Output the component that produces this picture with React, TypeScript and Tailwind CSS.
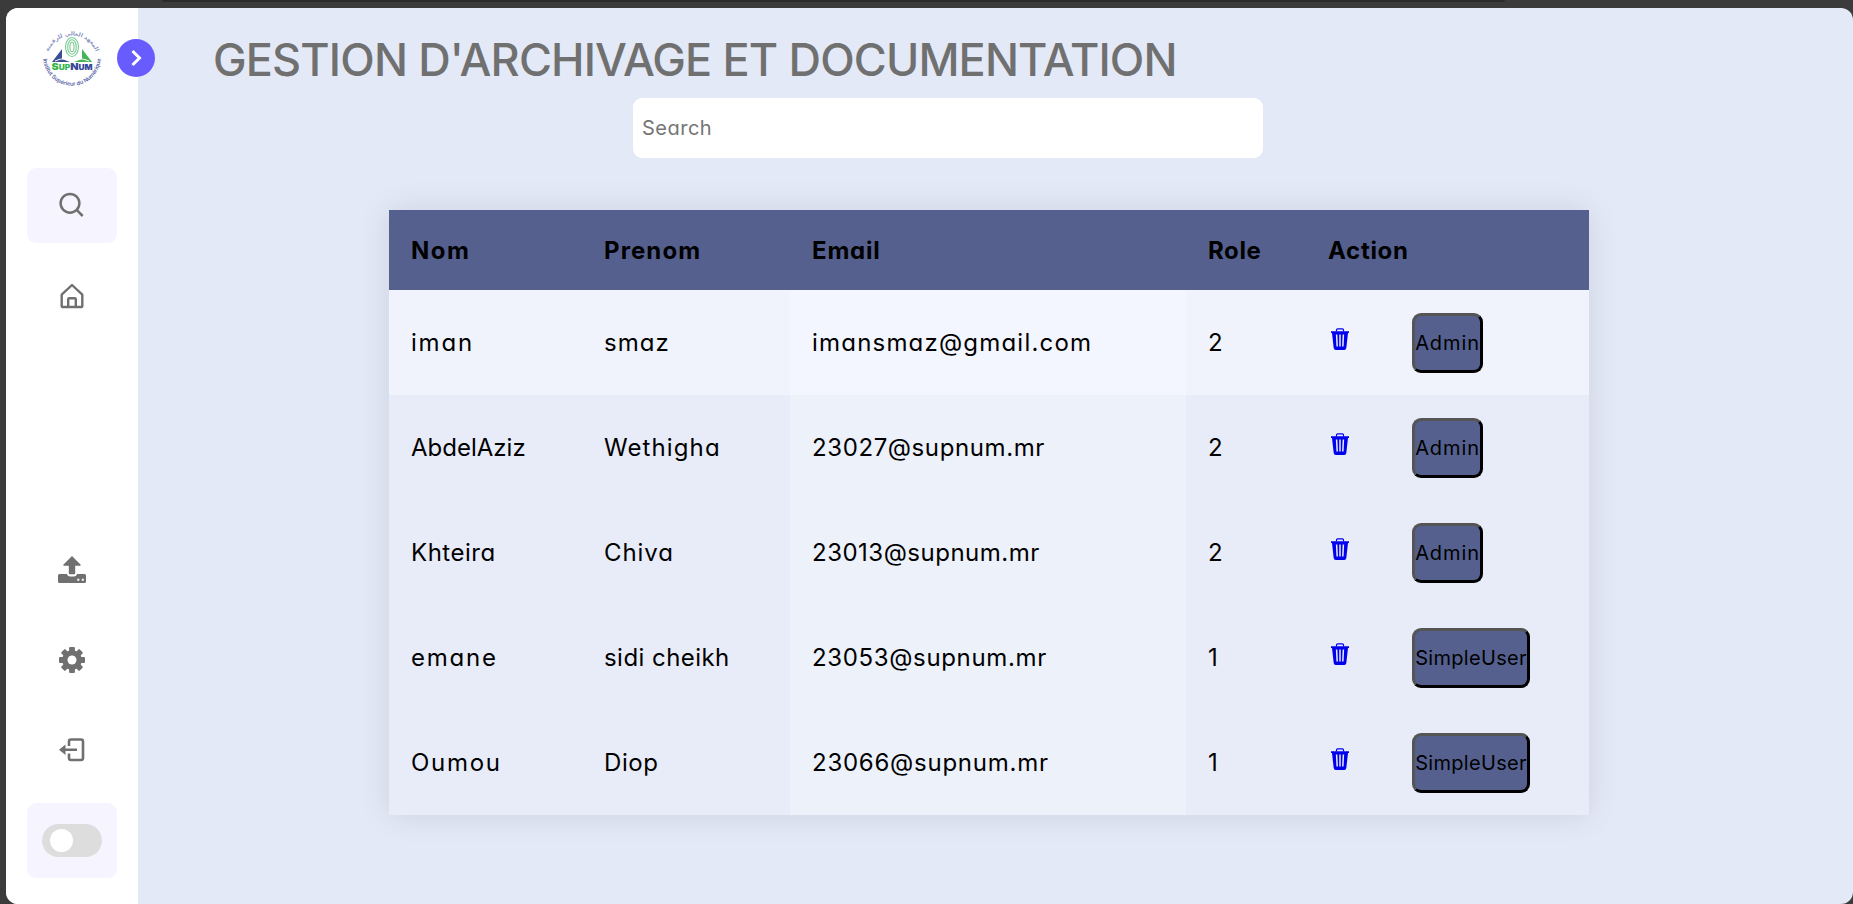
const headers = [
  { label: "Nom", tracking: "tracking-[1.5px]" },
  { label: "Prenom", tracking: "tracking-[1.1px]" },
  { label: "Email", tracking: "tracking-[0.8px]" },
  { label: "Role", tracking: "tracking-[0.6px]" },
  { label: "Action", tracking: "tracking-[0.7px]" },
];

type Cell = [text: string, tracking: string];

const users: { cells: Cell[]; role: string }[] = [
  { cells: [["iman", "tracking-[1.8px]"], ["smaz", "tracking-[1px]"], ["imansmaz@gmail.com", "tracking-[1.2px]"]], role: "2" },
  { cells: [["AbdelAziz", "tracking-[0px]"], ["Wethigha", "tracking-[1.1px]"], ["23027@supnum.mr", "tracking-[0.6px]"]], role: "2" },
  { cells: [["Khteira", "tracking-[0.5px]"], ["Chiva", "tracking-[0.9px]"], ["23013@supnum.mr", "tracking-[0.5px]"]], role: "2" },
  { cells: [["emane", "tracking-[1.8px]"], ["sidi cheikh", "tracking-[0.45px]"], ["23053@supnum.mr", "tracking-[0.65px]"]], role: "1" },
  { cells: [["Oumou", "tracking-[1.7px]"], ["Diop", "tracking-[0.6px]"], ["23066@supnum.mr", "tracking-[0.75px]"]], role: "1" },
];

function Logo() {
  return (
    <svg width="60" height="64" viewBox="0 0 60 64">
      <defs>
        <path id="top" d="M5 28 A25.500 25.500 0 0 1 55 28" />
        <path id="bottom" d="M1.200 29 A28.800 28.800 0 0 0 58.800 29" />
      </defs>
      <text fontSize="5.700" fill="#8b95c4" fontFamily="DejaVu Sans" fontWeight="bold" textAnchor="middle">
        <textPath href="#top" startOffset="50%">المعهد العالي للرقمنة</textPath>
      </text>
      <text fontSize="5.600" fill="#5966a8" fontFamily="Inter, sans-serif" fontWeight="600" textAnchor="middle">
        <textPath href="#bottom" startOffset="50%">Institut Supérieur du Numérique</textPath>
      </text>
      <path d="M10 34 L20 21 V31 L28 34Z" fill="#3b4f97" />
      <path d="M50 34 L40 21 V31 L32 34Z" fill="#45b457" />
      <path d="M13 33 Q24 28 29 34 Q35 28 47 33" fill="none" stroke="#fff" strokeWidth="1" />
      <g fill="none" stroke="#78cc91" strokeWidth="1.100">
        <ellipse cx="30" cy="19" rx="6.500" ry="9.500" />
        <ellipse cx="30" cy="19" rx="4.300" ry="7.200" />
        <ellipse cx="30" cy="19" rx="2.100" ry="4.800" />
      </g>
      <text x="9.500" y="41.500" fontFamily="Inter, sans-serif" fontSize="7" fontWeight="900" fill="#35b54a" textLength="41" lengthAdjust="spacingAndGlyphs">
        <tspan fontSize="9">S</tspan>UP<tspan fill="#35469a" fontSize="9">N</tspan><tspan fill="#35469a">UM</tspan>
      </text>
    </svg>
  );
}

function SearchIcon() {
  return (
    <svg width="26" height="26" viewBox="0 0 26 26" fill="none" stroke="#707070" strokeWidth="2.500">
      <circle cx="11" cy="11.300" r="9.400" />
      <path d="M17.600 17.900 23.700 24" />
    </svg>
  );
}

function HomeIcon() {
  return (
    <svg width="24" height="26" viewBox="0 0 24 26" fill="none" stroke="#707070" strokeWidth="2.400" strokeLinejoin="round">
      <path d="M1.700 11.700 12 2 22.300 11.700V23.200Q22.300 24 21.500 24H2.500Q1.700 24 1.700 23.200Z" />
      <path d="M8.200 24V16.200Q8.200 15.200 9.200 15.200H14.800Q15.800 15.200 15.800 16.200V24" />
    </svg>
  );
}

function UploadIcon() {
  return (
    <svg width="28" height="27" viewBox="0 0 28 27" fill="#707070">
      <path d="M14 0 22.700 8.800Q23 9.700 22 9.700H17.200V17.300Q17.200 18.300 16.200 18.300H11.800Q10.800 18.300 10.800 17.300V9.700H6Q5 9.700 5.300 8.800Z" />
      <path fillRule="evenodd" d="M1.500 18H8.800Q10 20.500 12 20.500H16Q18 20.500 19.200 18H26.500Q28 18 28 19.500V25.500Q28 27 26.500 27H1.500Q0 27 0 25.500V19.500Q0 18 1.500 18ZM19.300 22.800V24.800H21.300V22.800ZM23.800 22.800V24.800H25.800V22.800Z" />
    </svg>
  );
}

function GearIcon() {
  return (
    <svg width="26" height="26" viewBox="-13 -13 26 26">
      <g fill="#707070">
        <circle r="9.800" />
        {[0, 45, 90, 135].map((a) => (
          <rect key={a} x="-2.900" y="-13" width="5.800" height="26" rx="1" transform={`rotate(${a})`} />
        ))}
      </g>
      <circle r="4.500" fill="#fff" />
    </svg>
  );
}

function ExitIcon() {
  return (
    <svg width="26" height="24" viewBox="0 0 26 24">
      <path d="M10 8V3.500Q10 1.500 12 1.500H22Q24 1.500 24 3.500V20Q24 22 22 22H12Q10 22 10 20V15.500" fill="none" stroke="#707070" strokeWidth="2.600" />
      <path d="M0 11.700 6.500 6.500V10.400H18V13H6.500V17Z" fill="#707070" />
    </svg>
  );
}

function TrashIcon() {
  return (
    <svg width="18" height="22" viewBox="0 0 18 22">
      <path d="M5.500 3.500V2Q5.500.8 6.700.8H11.300Q12.500.8 12.500 2V3.500" fill="none" stroke="#0000ee" strokeWidth="1.200" />
      <path d="M0 3.300H18V5H0Z M1 5H17L15.300 20Q15 22 13.300 22H4.700Q3 22 2.700 20Z" fill="#0000ee" />
      <path d="M5.600 6.500 6.200 18.500M9 6.500V18.500M12.400 6.500 11.800 18.500" stroke="#e8edff" strokeWidth="1.500" />
    </svg>
  );
}

const cols = "grid grid-cols-[193px_208px_396px_120px_283px]";

export default function App() {
  return (
    <div className="flex h-[904px] w-[1853px] flex-col overflow-hidden bg-[#3b3b3b] font-[Inter,sans-serif] text-black [font-feature-settings:'cv11']">
      <div className="h-2 shrink-0">
        <div className="ml-[162px] h-0.5 w-[1343px] rounded-b bg-[#2b2b2b]" />
      </div>
      <div className="ml-1.5 flex h-[896px] overflow-hidden rounded-xl bg-[#e3e9f7]">
        <aside className="relative flex w-[132px] shrink-0 flex-col items-center bg-white">
          <div className="mt-5 h-[64px] w-[60px]"><Logo /></div>
          <button className="absolute top-[31px] left-[111px] flex size-[38px] items-center justify-center rounded-full bg-[#695cfe] pb-px">
            <svg width="12" height="18" viewBox="0 0 12 18" fill="none" stroke="#fff" strokeWidth="3">
              <path d="M2.500 2 9.500 9 2.500 16" />
            </svg>
          </button>
          <nav className="mt-[76px] flex flex-col items-center">
            <a className="flex h-[75px] w-[90px] items-center justify-center rounded-[9px] bg-[#f6f5ff] pb-px">
              <SearchIcon />
            </a>
            <a className="mt-[15px] flex h-[75px] w-[90px] items-center justify-center"><HomeIcon /></a>
          </nav>
          <div className="mt-[192px] flex flex-col items-center">
            <a className="flex h-[90px] items-center pb-[2px]"><UploadIcon /></a>
            <a className="flex h-[90px] items-center"><GearIcon /></a>
            <a className="flex h-[90px] items-center"><ExitIcon /></a>
            <div className="mt-2 flex h-[75px] w-[90px] items-center justify-center rounded-[9px] bg-[#f6f5ff]">
              <div className="flex h-[33px] w-[60px] items-center rounded-full bg-[#ddd] pl-2">
                <span className="size-[23px] rounded-full bg-white" />
              </div>
            </div>
          </div>
        </aside>
        <main className="flex flex-1 flex-col">
          <h1 className="mt-[18px] ml-[75px] h-[67px] text-[45px] leading-[67px] font-medium tracking-[-0.85px] whitespace-nowrap text-[#707070]">
            GESTION D'ARCHIVAGE ET DOCUMENTATION
          </h1>
          <input
            placeholder="Search"
            className="mt-[5px] ml-[495px] h-[60px] w-[630px] rounded-[9px] bg-white px-[9px] text-[20px] tracking-[0.5px] placeholder:text-[#757575]"
          />
          <section className="mt-[52px] ml-[251px] w-[1200px] shadow-[0_0_30px_rgba(0,0,0,0.1)]">
            <div className={`${cols} h-20 items-center bg-[#55608f] pt-0.5 text-[24px] font-bold`}>
              {headers.map((h) => (
                <span key={h.label} className={`pl-[22px] ${h.tracking}`}>{h.label}</span>
              ))}
            </div>
            {users.map((u, i) => (
              <div key={i} className={`${cols} h-[105px] text-[24px] ${i === 0 ? "bg-[#f0f3fc]" : "bg-[#e8ecf8]"}`}>
                {u.cells.map(([text, tracking], j) => (
                  <span
                    key={j}
                    className={`flex items-center pl-[22px] whitespace-nowrap ${tracking} ${j === 2 ? (i === 0 ? "bg-[#f3f6fe]" : "bg-[#edf1fa]") : ""}`}
                  >
                    {text}
                  </span>
                ))}
                <span className="flex items-center pl-[22px]">{u.role}</span>
                <div className="flex items-center pl-[25px]">
                  <div className="pb-[7px]"><TrashIcon /></div>
                  <button
                    className={`ml-[63px] h-[60px] rounded-[9px] border-[3px] border-t-[#555] border-r-black border-b-black border-l-[#555] bg-[#55608f] text-[20px] ${u.role === "2" ? "w-[71px] tracking-[0.9px]" : "w-[118px] tracking-[0.3px]"}`}
                  >
                    {u.role === "2" ? "Admin" : "SimpleUser"}
                  </button>
                </div>
              </div>
            ))}
          </section>
        </main>
      </div>
    </div>
  );
}
